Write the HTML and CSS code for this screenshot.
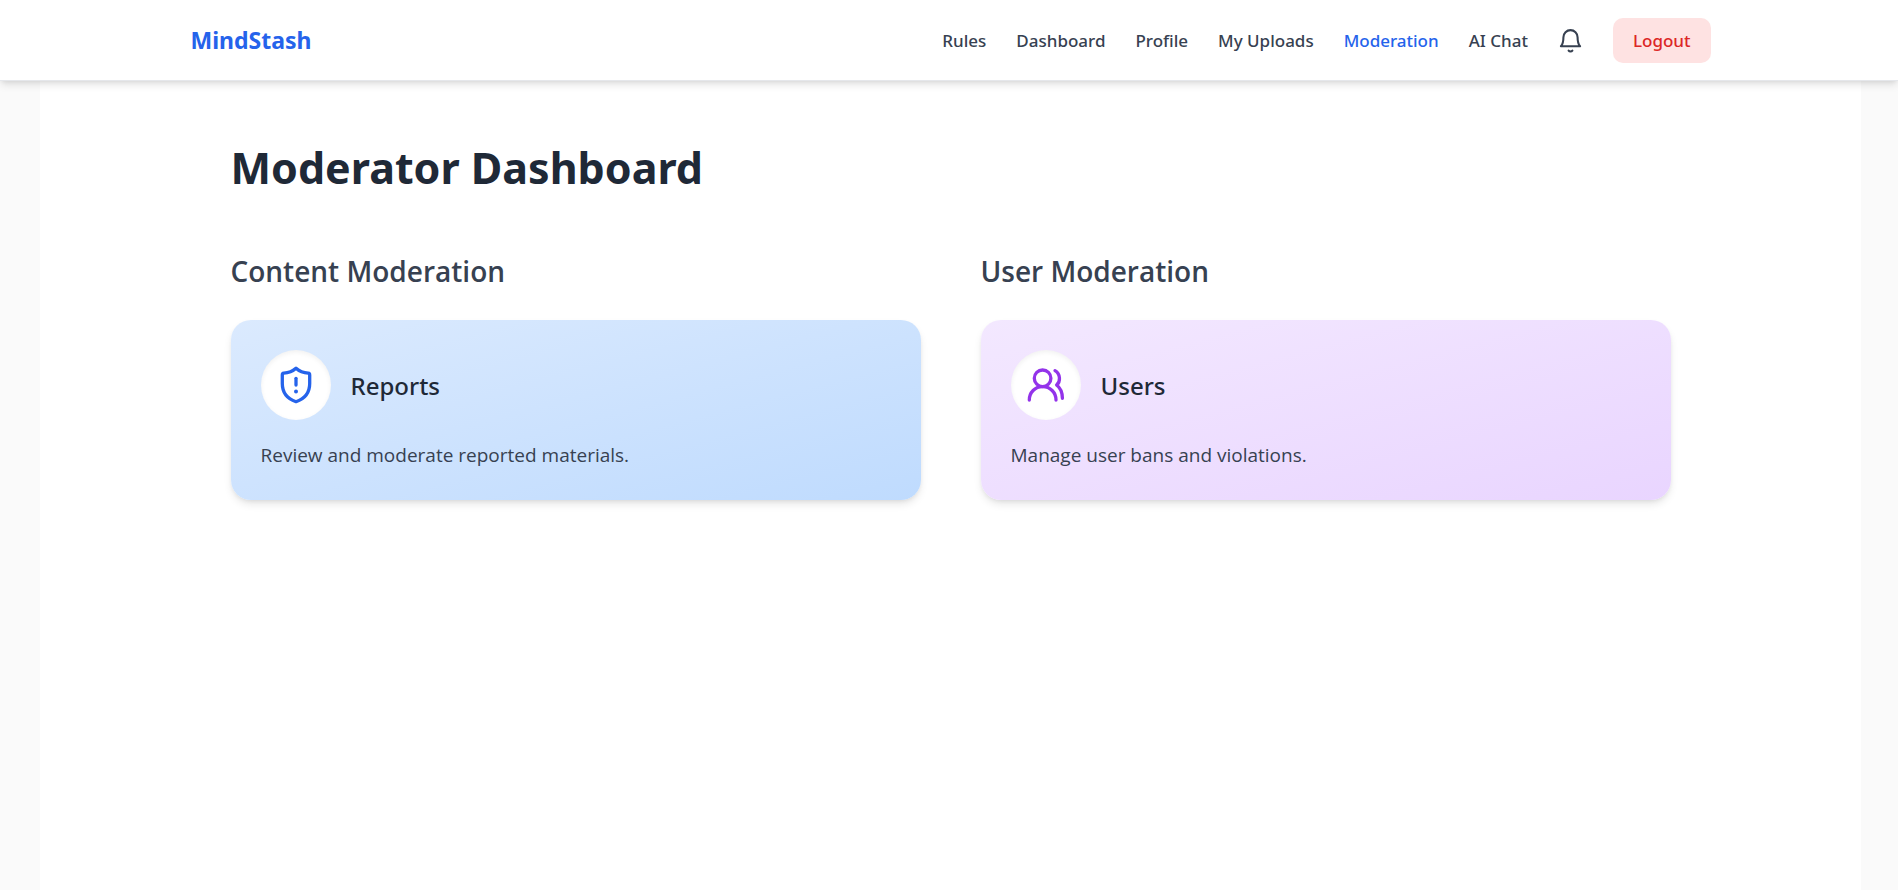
FILE: index.html
```html
<!DOCTYPE html>
<html lang="en">
<head>
  <meta charset="UTF-8" />
  <meta name="viewport" content="width=device-width, initial-scale=1.0"/>
  <title>MindStash - Moderator Dashboard</title>
  <link rel="stylesheet" href="styles.css">
</head>
<body>
  <header class="site-header">
    <div class="header-inner">
      <a class="logo" href="#">MindStash</a>
      <nav class="nav">
        <a href="#">Rules</a>
        <a href="#">Dashboard</a>
        <a href="#">Profile</a>
        <a href="#">My Uploads</a>
        <a class="active" href="#">Moderation</a>
        <a href="#">AI Chat</a>
        <button type="button" class="bell" aria-label="Notifications">
          <svg viewBox="0 0 24 24">
            <path class="line" d="M2.8 17.5C4.6 15.6 5.2 13.6 5.2 8.8A6.8 6.8 0 0 1 18.8 8.8C18.8 13.6 19.4 15.6 21.2 17.5Z"/>
            <path class="line" d="M10.2 21.8A2 1.3 0 0 0 13.8 21.8"/>
          </svg>
        </button>
        <button type="button" class="logout">Logout</button>
      </nav>
    </div>
  </header>

  <main class="page">
    <div class="container">
      <h1>Moderator Dashboard</h1>

      <div class="sections">
        <section>
          <h2>Content Moderation</h2>
          <a class="card card-blue" href="#">
            <div class="card-head">
              <span class="card-icon">
                <svg viewBox="0 0 40 40">
                  <path class="line" d="M20 3.3C16.5 6.5 12.5 8 7.8 8.2Q6.3 8.4 6.3 10V18.5C6.3 28 12 34 20 36.7C28 34 33.7 28 33.7 18.5V10Q33.7 8.4 32.2 8.2C27.5 8 23.5 6.5 20 3.3Z"/>
                  <path class="line" d="M20 13.3V20"/>
                  <circle class="dot" cx="20" cy="26.6" r="2"/>
                </svg>
              </span>
              <h3>Reports</h3>
            </div>
            <p>Review and moderate reported materials.</p>
          </a>
        </section>

        <section>
          <h2>User Moderation</h2>
          <a class="card card-purple" href="#">
            <div class="card-head">
              <span class="card-icon">
                <svg viewBox="0 0 40 40">
                  <circle class="line" cx="16.6" cy="13.3" r="8.3"/>
                  <path class="line" d="M3.3 35C3.3 27.5 9 21.6 16.6 21.6C24.2 21.6 30 27.5 30 35"/>
                  <path class="line" d="M29 5.7C34.5 9 34.8 16.5 30.6 20C34 22.5 36.4 27 36.4 33.3"/>
                </svg>
              </span>
              <h3>Users</h3>
            </div>
            <p>Manage user bans and violations.</p>
          </a>
        </section>
      </div>
    </div>
  </main>
</body>
</html>
```
FILE: styles.css
```css
* {
  box-sizing: border-box;
}

body {
  margin: 0;
  min-height: 100vh;
  display: flex;
  flex-direction: column;
  font-family: 'Segoe UI', 'Noto Sans', 'Open Sans', sans-serif;
  background-color: #fafafa;
  color: #1f2937;
}

a {
  color: inherit;
  text-decoration: none;
}

h1,
h2,
h3,
p {
  margin: 0;
}

button {
  border: none;
  font: inherit;
  cursor: pointer;
}

.site-header {
  position: relative;
  z-index: 10;
  padding: 0 37px 0 40px;
  background-color: #fff;
  border-bottom: 1px solid #e5e7eb;
  box-shadow: 0 5px 8px -1px rgba(0, 0, 0, 0.1), 0 2px 5px -2px rgba(0, 0, 0, 0.1);
}

.header-inner {
  max-width: 1520px;
  height: 80px;
  margin: 0 auto;
  display: flex;
  align-items: center;
  justify-content: space-between;
}

.logo {
  font-size: 23px;
  font-weight: 700;
  color: #2563eb;
}

.nav {
  display: flex;
  align-items: center;
  gap: 30px;
  font-size: 17px;
  font-weight: 500;
  color: #374151;
}

.nav .active {
  color: #2563eb;
}

.bell {
  padding: 0;
  display: flex;
  background: none;
  color: #374151;
}

.bell svg {
  width: 25px;
  height: 25px;
}

.logout {
  height: 45px;
  padding: 0 20px;
  border-radius: 10px;
  background-color: #fee2e2;
  color: #dc2626;
}

.line {
  fill: none;
  stroke: currentColor;
  stroke-width: 2;
  stroke-linecap: round;
  stroke-linejoin: round;
}

.page {
  flex: 1;
  margin: 0 37px 0 40px;
  padding: 60px 40px;
  background-color: #fff;
}

.container {
  max-width: 1440px;
  margin: 0 auto;
}

h1 {
  margin-bottom: 55px;
  font-size: 43px;
  line-height: 54px;
  font-weight: 700;
}

.sections {
  display: grid;
  grid-template-columns: 1fr 1fr;
  gap: 60px;
}

h2 {
  margin-bottom: 28px;
  font-family: 'Segoe UI', 'Open Sans', sans-serif;
  font-size: 28px;
  line-height: 42px;
  font-weight: 600;
  color: #374151;
}

.card {
  display: block;
  padding: 30px;
  border-radius: 20px;
  box-shadow: 0 5px 8px -1px rgba(0, 0, 0, 0.1), 0 2px 5px -2px rgba(0, 0, 0, 0.1);
}

.card-blue {
  background: linear-gradient(to bottom right, #dbeafe, #bfdbfe);
}

.card-purple {
  background: linear-gradient(to bottom right, #f3e8ff, #e9d5ff);
}

.card-head {
  display: flex;
  align-items: center;
  gap: 20px;
  margin-bottom: 20px;
}

.card-icon {
  width: 70px;
  height: 70px;
  display: flex;
  align-items: center;
  justify-content: center;
  border-radius: 50%;
  background-color: #fff;
  box-shadow: inset 0 2px 5px rgba(0, 0, 0, 0.06);
}

.card-icon svg {
  width: 40px;
  height: 40px;
}

.card-icon .line {
  stroke-width: 3.3;
}

.card-icon .dot {
  fill: currentColor;
}

.card-blue .card-icon {
  color: #2563eb;
}

.card-purple .card-icon {
  color: #9333ea;
}

h3 {
  font-size: 24px;
  line-height: 35px;
  font-weight: 500;
}

.card p {
  font-family: 'Segoe UI', 'Open Sans', sans-serif;
  font-size: 19px;
  line-height: 30px;
  color: #374151;
}

@media (max-width: 900px) {
  .sections {
    grid-template-columns: 1fr;
  }

  .header-inner {
    height: auto;
    padding: 15px 0;
    flex-wrap: wrap;
  }

  .nav {
    flex-wrap: wrap;
  }
}
```
